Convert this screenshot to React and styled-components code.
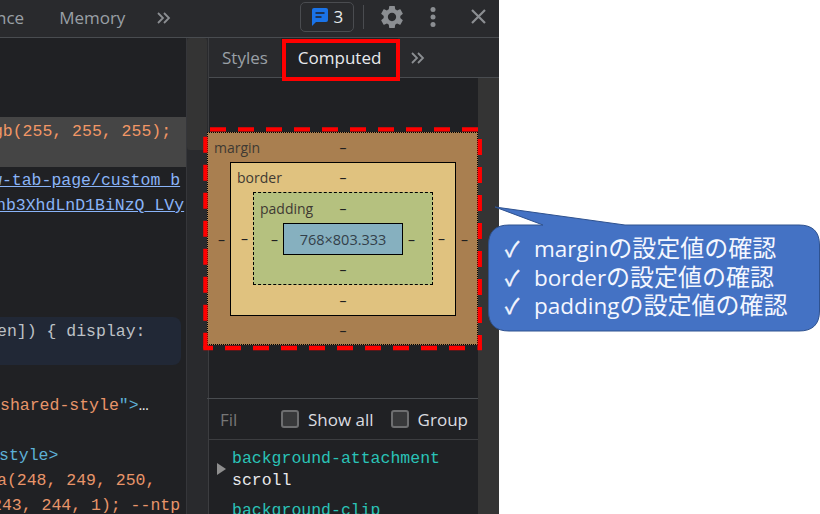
import React from 'react';
import styled, { createGlobalStyle } from 'styled-components';

const GlobalStyle = createGlobalStyle`
  html, body { margin: 0; padding: 0; background: #fff; }
  body { width: 820px; height: 514px; overflow: hidden; font-family: 'Open Sans', 'Noto Sans', sans-serif; }
`;

const Page = styled.div`
  position: relative;
  width: 820px;
  height: 514px;
  overflow: hidden;
`;

const Devtools = styled.div`
  width: 499px;
  height: 514px;
  display: flex;
  flex-direction: column;
  background: #202124;
  color: #9aa0a6;
  overflow: hidden;
`;

const TopBar = styled.div`
  height: 38px;
  flex: none;
  box-sizing: border-box;
  padding-bottom: 2px;
  display: flex;
  align-items: center;
  background: #292a2d;
  border-bottom: 1px solid #494c50;
`;

const TopTab = styled.div`
  font-size: 17px;
  color: #9aa0a6;
  margin-left: ${(p) => p.$left}px;
  white-space: nowrap;
`;

const Chevrons = styled.svg`
  display: block;
  flex: none;
  margin-left: ${(p) => p.$left}px;
`;

const Badge = styled.div`
  box-sizing: border-box;
  width: 54px;
  height: 30px;
  margin-left: 129px;
  margin-bottom: 2px;
  border: 1px solid #4a4c50;
  border-radius: 5px;
  display: flex;
  align-items: center;
  justify-content: center;
  gap: 6px;
  color: #e8eaed;
  font-size: 17px;
`;

const Divider = styled.div`
  width: 1px;
  height: 24px;
  background: #4a4c50;
  margin-left: 9px;
  margin-bottom: 2px;
`;

const IconSlot = styled.div`
  display: flex;
  margin-left: ${(p) => p.$left}px;
  margin-bottom: 2px;
`;

const Columns = styled.div`
  flex: 1;
  display: flex;
  min-height: 0;
`;

const SourcePane = styled.div`
  width: 186px;
  flex: none;
  font-family: 'Liberation Mono', monospace;
  font-size: 16.5px;
  overflow: hidden;
  padding-top: 79px;
  display: flex;
  flex-direction: column;
`;

const CodeLine = styled.div`
  height: 25px;
  line-height: 28px;
  flex: none;
  margin-top: ${(p) => p.$top || 0}px;
  text-indent: ${(p) => p.$shift || 0}px;
  white-space: pre;
  color: #e8956a;
`;

const SelectedBlock = styled.div`
  height: 50px;
  flex: none;
  background: #454545;
  color: #f29766;
  line-height: 30px;
  text-indent: -17px;
  white-space: pre;
`;

const CodeLink = styled.div`
  height: 25px;
  flex: none;
  line-height: 27px;
  color: #8ab4f8;
  text-decoration: underline;
  text-indent: ${(p) => p.$shift}px;
  white-space: pre;
`;

const NoteBlock = styled.div`
  height: 48px;
  flex: none;
  margin-top: 100px;
  margin-right: 5px;
  background: #212836;
  border-radius: 0 8px 8px 0;
  color: #bdc1c6;
  line-height: 30px;
  text-indent: -3px;
  white-space: pre;
`;

const Tag = styled.span`
  color: #5db0d7;
`;

const Ellipsis = styled.span`
  color: #e8eaed;
`;

const Scrollbar = styled.div`
  width: 22px;
  flex: none;
  background: #292a2d;
  border-left: 1px solid #35363a;
  box-sizing: border-box;
`;

const ScrollThumb = styled.div`
  height: 112px;
  width: 20px;
  background: #343434;
  border-radius: 3px;
`;

const SidePane = styled.div`
  flex: 1;
  display: flex;
  flex-direction: column;
  min-width: 0;
  border-left: 1px solid #3c3d40;
`;

const SideTabs = styled.div`
  height: 40px;
  flex: none;
  display: flex;
  align-items: center;
  background: #292a2d;
  border-bottom: 1px solid #494c50;
  box-sizing: border-box;
  font-size: 17px;
`;

const SideTab = styled.div`
  height: 100%;
  display: flex;
  align-items: center;
  color: ${(p) => (p.$active ? '#e8eaed' : '#9aa0a6')};
  background: ${(p) => (p.$active ? '#202124' : 'transparent')};
  padding: 0 ${(p) => p.$pad}px;
`;

const SideBody = styled.div`
  flex: 1;
  display: flex;
  min-height: 0;
`;

const SideMain = styled.div`
  flex: 1;
  min-width: 0;
  display: flex;
  flex-direction: column;
`;

const SideScroll = styled.div`
  width: 21px;
  flex: none;
  background: #343434;
`;

const Diagram = styled.div`
  height: 321px;
  flex: none;
  padding: 54px 0 0 0;
  margin-left: -2px;
  box-sizing: border-box;
  border-bottom: 1px solid #494c50;
`;

const Box = styled.div`
  box-sizing: border-box;
  width: ${(p) => p.$w}px;
  height: ${(p) => p.$h}px;
  background: ${(p) => p.$bg};
  border: 1px ${(p) => p.$line} #000;
  display: grid;
  grid-template-rows: ${(p) => p.$row}px auto 1fr;
  grid-template-columns: ${(p) => p.$col}px auto 1fr;
  align-items: center;
  color: #202020;
  font-size: 14px;
`;

const BoxLabel = styled.div`
  grid-column: 1 / 3;
  grid-row: 1;
  justify-self: start;
  padding-left: 6px;
  color: #3f3a33;
`;

const TopDash = styled.div`
  grid-column: 2;
  grid-row: 1;
  justify-self: center;
`;

const BottomDash = styled.div`
  grid-column: 2;
  grid-row: 3;
  justify-self: center;
`;

const LeftDash = styled.div`
  grid-column: 1;
  grid-row: 2;
  justify-self: end;
  margin-right: 5px;
`;

const RightDash = styled.div`
  grid-column: 3;
  grid-row: 2;
  justify-self: start;
  margin-left: 5px;
`;

const Center = styled.div`
  grid-column: 2;
  grid-row: 2;
  display: flex;
`;

const ContentBox = styled.div`
  box-sizing: border-box;
  width: 120px;
  height: 32px;
  background: #86b0bf;
  border: 1px solid #000;
  display: flex;
  align-items: center;
  justify-content: center;
  font-size: 14.5px;
  color: #33404a;
`;

const FilterRow = styled.div`
  height: 41px;
  flex: none;
  display: flex;
  align-items: center;
  border-bottom: 1px solid #3c3d40;
  box-sizing: border-box;
  font-size: 17px;
  color: #dadce0;
`;

const FilterHint = styled.div`
  color: #777;
  margin-left: 11px;
  width: 61px;
`;

const CheckLabel = styled.label`
  display: flex;
  align-items: center;
  gap: 9px;
  margin-right: ${(p) => p.$gap}px;
`;

const CheckMark = styled.span`
  box-sizing: border-box;
  width: 18px;
  height: 18px;
  border: 2px solid #6d6e70;
  border-radius: 3px;
  background: #38393b;
`;

const PropList = styled.div`
  position: relative;
  padding: 8px 0 0 23px;
  font-family: 'Liberation Mono', monospace;
  font-size: 16.5px;
  line-height: 22px;
`;

const Triangle = styled.div`
  position: absolute;
  left: 8px;
  top: 23px;
  border-left: 9px solid #8e8e8e;
  border-top: 6px solid transparent;
  border-bottom: 6px solid transparent;
`;

const PropName = styled.div`
  color: #2ac3b7;
  margin-top: ${(p) => p.$top || 0}px;
`;

const PropValue = styled.div`
  color: #e8eaed;
`;

// red annotation marks drawn over the screenshot
const RedDashed = styled.svg`
  position: absolute;
  left: 200px;
  top: 124px;
`;

const RedFrame = styled.div`
  position: absolute;
  left: 282px;
  top: 39px;
  width: 118px;
  height: 42px;
  box-sizing: border-box;
  border: 4px solid #ff0000;
`;

const Callout = styled.svg`
  position: absolute;
  left: 480px;
  top: 195px;
`;

const CalloutText = styled.div`
  position: absolute;
  left: 505px;
  top: 233px;
  font-family: 'Noto Sans CJK JP', 'Noto Sans', sans-serif;
  font-size: 24px;
  color: #f4f7ff;
  white-space: nowrap;
`;

const CalloutRow = styled.div`
  display: flex;
  align-items: baseline;
  height: 28.5px;
  line-height: 28.5px;
`;

const Tick = styled.span`
  width: 29px;
  font-size: 21px;
  -webkit-text-stroke: 0.4px #f4f7ff;
`;

const Word = styled.span`
  font-family: 'Open Sans', sans-serif;
  font-size: 22.5px;
`;

const DoubleChevron = ({ left }) => (
  <Chevrons $left={left} width="14" height="12" viewBox="0 0 14 12" fill="none" stroke="#8b8e92" strokeWidth="1.8">
    <path d="M1 1l5 5-5 5M7 1l5 5-5 5" />
  </Chevrons>
);

const rows = ['margin', 'border', 'padding'];

export default function App() {
  return (
    <Page>
      <GlobalStyle />
      <Devtools>
        <TopBar>
          <TopTab $left={-4}>nce</TopTab>
          <TopTab $left={35}>Memory</TopTab>
          <DoubleChevron left={32} />
          <Badge>
            <svg width="16" height="18" viewBox="0 0 16 18">
              <path d="M2 0h12a2 2 0 0 1 2 2v10a2 2 0 0 1-2 2H4l-4 4V2a2 2 0 0 1 2-2z" fill="#1a73e8" />
              <path d="M3.500 5h9M3.500 9h6" stroke="#202124" strokeWidth="1.500" />
            </svg>
            3
          </Badge>
          <Divider />
          <IconSlot $left={17}>
            <svg width="22" height="22" viewBox="2.500 2.500 19 19" fill="#8b8e92">
              <path d="M19.140 12.940c.04-.3.06-.61.06-.94 0-.32-.02-.64-.07-.94l2.030-1.580c.18-.14.23-.41.12-.61l-1.920-3.320c-.12-.22-.37-.29-.59-.22l-2.390.96c-.5-.38-1.030-.7-1.620-.94l-.36-2.540c-.04-.24-.24-.41-.48-.41h-3.840c-.24 0-.43.17-.47.41l-.36 2.540c-.59.24-1.130.57-1.620.94l-2.390-.96c-.22-.08-.47 0-.59.22L2.740 8.870c-.12.21-.08.47.12.61l2.030 1.580c-.05.3-.09.63-.09.94s.02.64.07.94l-2.030 1.580c-.18.14-.23.41-.12.61l1.920 3.320c.12.22.37.29.59.22l2.390-.96c.5.38 1.030.7 1.620.94l.36 2.540c.05.24.24.41.48.41h3.840c.24 0 .44-.17.47-.41l.36-2.540c.59-.24 1.130-.56 1.620-.94l2.390.96c.22.08.47 0 .59-.22l1.920-3.320c.12-.22.07-.47-.12-.61l-2.010-1.580zM12 15.600c-1.980 0-3.600-1.620-3.600-3.600s1.620-3.600 3.600-3.600 3.600 1.620 3.600 3.600-1.620 3.600-3.600 3.600z" />
            </svg>
          </IconSlot>
          <IconSlot $left={27}>
            <svg width="6" height="20" viewBox="0 0 6 20" fill="#8b8e92">
              <circle cx="3" cy="2.500" r="2.500" />
              <circle cx="3" cy="10" r="2.500" />
              <circle cx="3" cy="17.500" r="2.500" />
            </svg>
          </IconSlot>
          <IconSlot $left={35}>
            <svg width="15" height="15" viewBox="0 0 15 15" stroke="#8b8e92" strokeWidth="2.200">
              <path d="M1 1l13 13M14 1L1 14" />
            </svg>
          </IconSlot>
        </TopBar>
        <Columns>
          <SourcePane>
            <SelectedBlock>rgb(255, 255, 255);</SelectedBlock>
            <CodeLink $shift={-8}>w-tab-page/custom_b</CodeLink>
            <CodeLink $shift={-4}>nb3XhdLnD1BiNzQ_LVy</CodeLink>
            <NoteBlock>en]) &#123; display:</NoteBlock>
            <CodeLine $top={27}>
              shared-style<Tag>"&gt;</Tag>
              <Ellipsis>…</Ellipsis>
            </CodeLine>
            <CodeLine $top={25} $shift={-1}>
              <Tag>style&gt;</Tag>
            </CodeLine>
            <CodeLine $shift={-3}>a(248, 249, 250,</CodeLine>
            <CodeLine $shift={-8}>243, 244, 1); --ntp</CodeLine>
          </SourcePane>
          <Scrollbar>
            <ScrollThumb />
          </Scrollbar>
          <SidePane>
            <SideTabs>
              <SideTab $pad={13}>Styles</SideTab>
              <SideTab $active $pad={17}>Computed</SideTab>
              <DoubleChevron left={13} />
            </SideTabs>
            <SideBody>
              <SideMain>
                <Diagram>
                  <Box $w={271} $h={213} $bg="#a97f50" $line="dotted" $row={29} $col={22}>
                    <BoxLabel>margin</BoxLabel>
                    <TopDash>–</TopDash>
                    <LeftDash>–</LeftDash>
                    <Center>
                      <Box $w={226} $h={154} $bg="#e0c27f" $line="solid" $row={29} $col={22}>
                        <BoxLabel>border</BoxLabel>
                        <TopDash>–</TopDash>
                        <LeftDash>–</LeftDash>
                        <Center>
                          <Box $w={180} $h={93} $bg="#b5c17f" $line="dashed" $row={30} $col={29}>
                            <BoxLabel>padding</BoxLabel>
                            <TopDash>–</TopDash>
                            <LeftDash>–</LeftDash>
                            <Center>
                              <ContentBox>768×803.333</ContentBox>
                            </Center>
                            <RightDash>–</RightDash>
                            <BottomDash>–</BottomDash>
                          </Box>
                        </Center>
                        <RightDash>–</RightDash>
                        <BottomDash>–</BottomDash>
                      </Box>
                    </Center>
                    <RightDash>–</RightDash>
                    <BottomDash>–</BottomDash>
                  </Box>
                </Diagram>
                <FilterRow>
                  <FilterHint>Fil</FilterHint>
                  <CheckLabel $gap={17}><CheckMark />Show all</CheckLabel>
                  <CheckLabel $gap={0}><CheckMark />Group</CheckLabel>
                </FilterRow>
                <PropList>
                  <Triangle />
                  <PropName>background-attachment</PropName>
                  <PropValue>scroll</PropValue>
                  <PropName $top={8}>background-clip</PropName>
                </PropList>
              </SideMain>
              <SideScroll />
            </SideBody>
          </SidePane>
        </Columns>
      </Devtools>
      <RedFrame />
      <RedDashed width="290" height="232" viewBox="200 124 290 232" fill="none" stroke="#ff0000" strokeWidth="4.300">
        <path d="M210 129.300H478M479.800 139V350M465 348H225M205.400 136.700V350" strokeDasharray="16 12" />
        <path d="M213 348H203.300M482 348H477.700" />
      </RedDashed>
      <Callout width="340" height="145" viewBox="0 0 340 145">
        <path d="M15 12 L145 30 H319 Q339.500 30 339.500 50 V116 Q339.500 136 319 136 H29 Q8.500 136 8.500 116 V50 Q8.500 30 29 30 H63 Z" fill="#4472c4" stroke="#2f528f" strokeWidth="1" />
      </Callout>
      <CalloutText>
        {rows.map((r) => (
          <CalloutRow key={r}>
            <Tick>✓</Tick>
            <Word>{r}</Word>の設定値の確認
          </CalloutRow>
        ))}
      </CalloutText>
    </Page>
  );
}
